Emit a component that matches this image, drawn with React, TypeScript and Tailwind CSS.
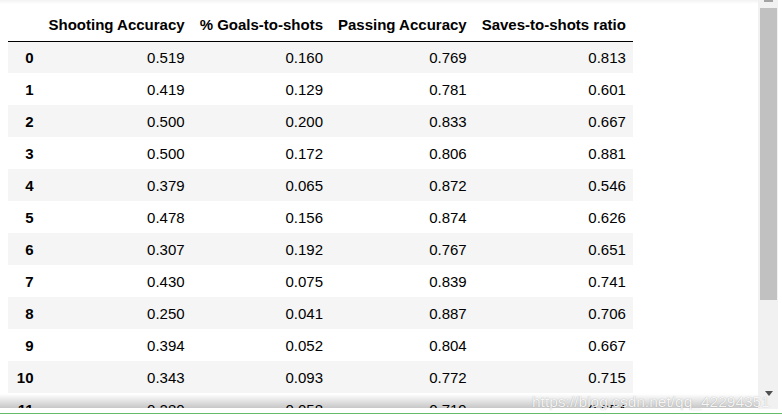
import React from 'react';

const rows: [number, string, string, string, string][] = [
  [0, '0.519', '0.160', '0.769', '0.813'],
  [1, '0.419', '0.129', '0.781', '0.601'],
  [2, '0.500', '0.200', '0.833', '0.667'],
  [3, '0.500', '0.172', '0.806', '0.881'],
  [4, '0.379', '0.065', '0.872', '0.546'],
  [5, '0.478', '0.156', '0.874', '0.626'],
  [6, '0.307', '0.192', '0.767', '0.651'],
  [7, '0.430', '0.075', '0.839', '0.741'],
  [8, '0.250', '0.041', '0.887', '0.706'],
  [9, '0.394', '0.052', '0.804', '0.667'],
  [10, '0.343', '0.093', '0.772', '0.715'],
  [11, '0.280', '0.058', '0.719', '0.654'],
  [12, '0.224', '0.088', '0.827', '0.778'],
  [13, '0.556', '0.172', '0.921', '0.938'],
  [14, '0.472', '0.167', '0.814', '0.613'],
  [15, '0.212', '0.091', '0.770', '0.667'],
];

const headers = ['Shooting Accuracy', '% Goals-to-shots', 'Passing Accuracy', 'Saves-to-shots ratio'];
const widths = ['w-[151px]', 'w-[138px]', 'w-[143px]', 'w-[159px]'];

function Scrollbar() {
  return (
    <div className="relative w-[20px] h-[409px] bg-[#f1f1f1] flex-shrink-0">
      <div className="ml-[6px] w-[9px] h-[2px] bg-[#a3a3a3]" />
      <div className="ml-[2px] mt-[6px] w-[17px] h-[292px] bg-[#c1c1c1]" />
      <svg className="absolute left-[7px] top-[391px]" width="8" height="5" viewBox="0 0 8 5">
        <path d="M0 0 L8 0 L4 5 Z" fill="#505050" />
      </svg>
    </div>
  );
}

export default function App() {
  return (
    <div className="relative w-[782px] h-[416px] bg-white overflow-hidden font-['Liberation_Sans',Arial,sans-serif] text-black">
      <div className="flex h-[408px]">
        <div className="relative flex-1 overflow-hidden pt-[9px] pl-[8px]">
          <table className="table-fixed border-collapse text-[15px] leading-[17px]">
            <thead>
              <tr className="h-8 border-b border-black">
                <th className="w-[33px]" />
                {headers.map((h, i) => (
                  <th key={h} className={`${widths[i]} px-[7.5px] pb-[8px] align-bottom text-right font-bold whitespace-nowrap`}>
                    {h}
                  </th>
                ))}
              </tr>
            </thead>
            <tbody>
              {rows.map((r, i) => (
                <tr key={r[0]} className={`h-8 ${i % 2 === 0 ? 'bg-[#f5f5f5]' : 'bg-white'}`}>
                  <th className="px-[7.5px] text-right font-bold">{r[0]}</th>
                  {r.slice(1).map((v, j) => (
                    <td key={j} className="px-[7.5px] text-right">{v}</td>
                  ))}
                </tr>
              ))}
            </tbody>
          </table>
          <div className="pointer-events-none absolute left-0 right-0 top-0 h-[4px] bg-gradient-to-b from-black/[0.05] to-transparent" />
          <div className="pointer-events-none absolute left-0 right-0 top-[394px] h-[14px] bg-gradient-to-b from-white/0 to-black/[0.22]" />
        </div>
        <Scrollbar />
        <div className="w-[4px]" />
      </div>
      <div className="h-[5px]" />
      <div className="h-[1px] bg-[#66bb6a]" />
      <div className="absolute left-[532px] top-[393px] text-[15.5px] leading-[18px] text-white/90 [text-shadow:0_0_1px_rgba(0,0,0,0.35)] whitespace-nowrap">
        https://blog.csdn.net/qq_42294351
      </div>
    </div>
  );
}
